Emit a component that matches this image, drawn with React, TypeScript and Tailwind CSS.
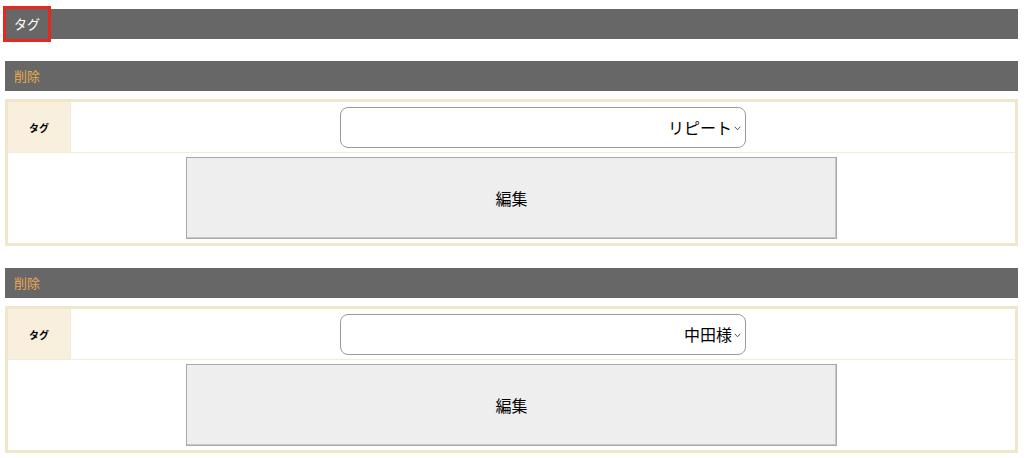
const jp = { fontFamily: '"Noto Sans CJK JP", "Noto Sans", sans-serif' };

function Chevron() {
  return (
    <svg width="7" height="5" viewBox="0 0 7 5" className="ml-[2px] mt-[3px]">
      <path d="M0.8 0.8 L3.5 3.8 L6.2 0.8" fill="none" stroke="#555" strokeWidth="1" />
    </svg>
  );
}

function TagBlock({ value }: { value: string }) {
  return (
    <div className="mt-[22px]">
      <div className="flex h-[30px] items-center bg-[#676767] px-[9px] text-[13px] text-[#eaa84f]">
        削除
      </div>
      <div className="mt-[8px] border-[3px] border-[#efe6cc]">
        <div className="flex h-[51px] border-b border-[#f1ebd9]">
          <div className="flex w-[63px] items-center justify-center border-r border-[#f1ebd9] bg-[#f8f0dc] text-[10px] font-bold text-black">
            タグ
          </div>
          <div className="flex flex-1 items-center justify-center">
            <div className="flex h-[41px] w-[406px] items-center justify-end rounded-[8px] border border-[#9a9a9a] bg-white pr-[4px] text-[16px] text-black">
              {value}
              <Chevron />
            </div>
          </div>
        </div>
        <div className="flex h-[90px] items-center justify-center">
          <button className="h-[82px] w-[651px] border border-[#a8a8a8] bg-[#eeeeee] text-[16px] text-black shadow-[inset_-1px_-1px_0_#c8c8c8]">
            編集
          </button>
        </div>
      </div>
    </div>
  );
}

export default function App() {
  return (
    <div className="min-h-[458px] bg-white pl-[5px] pr-[6px] pt-[9px]" style={jp}>
      <div className="relative flex h-[30px] items-center bg-[#676767] px-[9px] text-[13px] text-white">
        タグ
        <div className="absolute left-[-2px] top-[-3px] h-[36px] w-[48px] border-[3px] border-[#e8271f]" />
      </div>
      <TagBlock value="リピート" />
      <TagBlock value="中田様" />
    </div>
  );
}
